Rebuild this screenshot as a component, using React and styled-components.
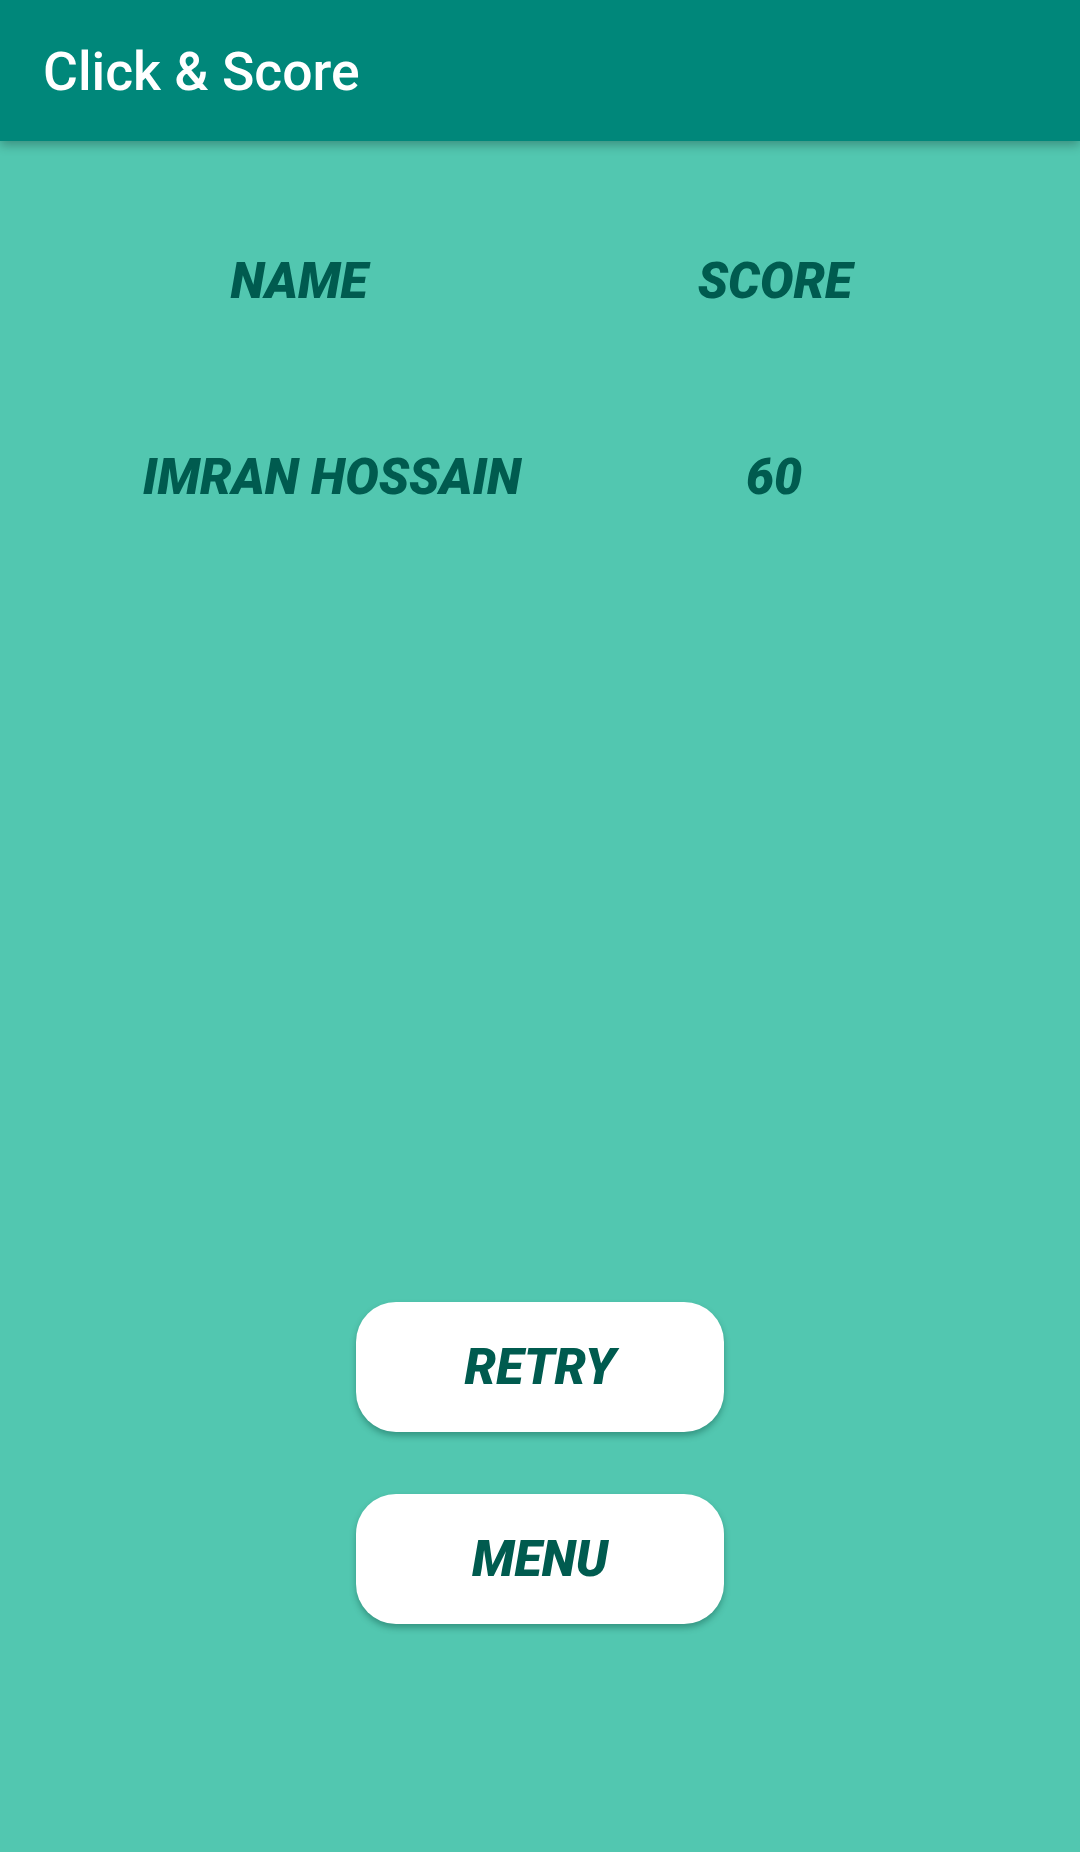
import React from "react";
import styled, { createGlobalStyle } from "styled-components";

const GlobalStyle = createGlobalStyle`
  html, body {
    margin: 0;
    padding: 0;
    background-color: #52c7b0;
  }
  body {
    font-family: Roboto, "Noto Sans", sans-serif;
  }
`;

const Screen = styled.div`
  width: 1080px;
  min-height: 1852px;
  background-color: #52c7b0;
  display: flex;
  flex-direction: column;
`;

const AppBar = styled.header`
  height: 141px;
  background-color: #00877a;
  display: flex;
  align-items: center;
  padding-left: 43px;
  box-sizing: border-box;
  box-shadow: 0 4px 10px rgba(0, 0, 0, 0.28);
  position: relative;
  z-index: 1;
`;

const Title = styled.h1`
  margin: 0;
  margin-top: 2px;
  color: #ffffff;
  font-family: Roboto, sans-serif;
  font-weight: 500;
  font-size: 53.5px;
  line-height: 1;
`;

const Table = styled.section`
  display: flex;
  flex-direction: column;
  gap: 136px;
  padding-top: 110px;
`;

const Row = styled.div`
  display: flex;
`;

const Cell = styled.div`
  width: ${(p) => p.$width}px;
  text-align: center;
  color: #005b4f;
  font-family: Roboto, sans-serif;
  font-style: italic;
  font-weight: 900;
  font-size: 50px;
  line-height: 60px;
  white-space: nowrap;
`;

const Actions = styled.div`
  margin-top: 795px;
  display: flex;
  flex-direction: column;
  align-items: center;
  gap: 62px;
`;

const ActionButton = styled.button`
  width: 368px;
  height: 130px;
  border: none;
  border-radius: 40px;
  background-color: #ffffff;
  color: #005b4f;
  font-family: Roboto, sans-serif;
  font-style: italic;
  font-weight: 900;
  font-size: 50px;
  cursor: pointer;
  box-shadow: 0 4px 6px rgba(0, 60, 50, 0.35);
  padding: 0;
`;

const rows = [
  { cells: [["NAME", 598], ["SCORE", 354]] },
  { cells: [["IMRAN HOSSAIN", 664], ["60", 220]] },
];

export default function App() {
  return (
    <Screen>
      <GlobalStyle />
      <AppBar>
        <Title>Click &amp; Score</Title>
      </AppBar>
      <Table>
        {rows.map((row, i) => (
          <Row key={i}>
            {row.cells.map(([text, width]) => (
              <Cell key={text} $width={width}>
                {text}
              </Cell>
            ))}
          </Row>
        ))}
      </Table>
      <Actions>
        <ActionButton>RETRY</ActionButton>
        <ActionButton>MENU</ActionButton>
      </Actions>
    </Screen>
  );
}
